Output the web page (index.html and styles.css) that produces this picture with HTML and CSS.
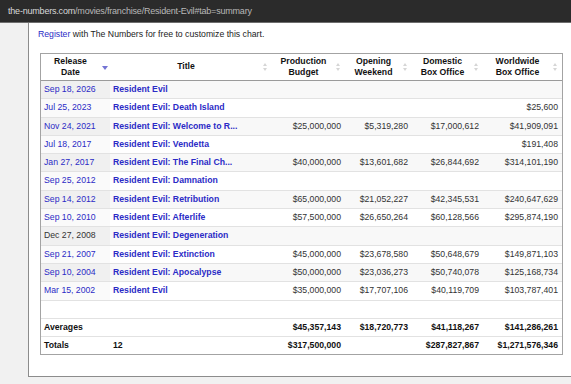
FILE: index.html
```html
<!DOCTYPE html>
<html lang="en">
<head>
    <meta charset="UTF-8">
    <meta name="viewport" content="width=device-width, initial-scale=1.0">
    <title>Resident Evil - The Numbers</title>
    <link rel="stylesheet" href="styles.css">
</head>
<body>
    <div class="urlbar">
        <span class="domain">the-numbers.com</span><span class="path">/movies/franchise/Resident-Evil#tab=summary</span>
    </div>

    <div class="page">
        <div class="panel">
            <p class="register"><a href="#">Register</a> with The Numbers for free to customize this chart.</p>

            <div class="table-box">
                <table class="chart">
                    <colgroup>
                        <col class="c-date">
                        <col class="c-title">
                        <col class="c-budget">
                        <col class="c-opening">
                        <col class="c-domestic">
                        <col class="c-world">
                    </colgroup>
                    <thead>
                        <tr>
                            <th class="sorted-desc">Release<br>Date</th>
                            <th class="sortable">Title</th>
                            <th class="sortable">Production<br>Budget</th>
                            <th class="sortable">Opening<br>Weekend</th>
                            <th class="sortable">Domestic<br>Box Office</th>
                            <th class="sortable">Worldwide<br>Box Office</th>
                        </tr>
                    </thead>
                    <tbody>
                        <tr class="odd">
                            <td class="sorted"><a href="#">Sep 18, 2026</a></td>
                            <td><b><a href="#">Resident Evil</a></b></td>
                            <td class="num"></td>
                            <td class="num"></td>
                            <td class="num"></td>
                            <td class="num"></td>
                        </tr>
                        <tr>
                            <td class="sorted"><a href="#">Jul 25, 2023</a></td>
                            <td><b><a href="#">Resident Evil: Death Island</a></b></td>
                            <td class="num"></td>
                            <td class="num"></td>
                            <td class="num"></td>
                            <td class="num">$25,600</td>
                        </tr>
                        <tr class="odd">
                            <td class="sorted"><a href="#">Nov 24, 2021</a></td>
                            <td><b><a href="#">Resident Evil: Welcome to R...</a></b></td>
                            <td class="num">$25,000,000</td>
                            <td class="num">$5,319,280</td>
                            <td class="num">$17,000,612</td>
                            <td class="num">$41,909,091</td>
                        </tr>
                        <tr>
                            <td class="sorted"><a href="#">Jul 18, 2017</a></td>
                            <td><b><a href="#">Resident Evil: Vendetta</a></b></td>
                            <td class="num"></td>
                            <td class="num"></td>
                            <td class="num"></td>
                            <td class="num">$191,408</td>
                        </tr>
                        <tr class="odd">
                            <td class="sorted"><a href="#">Jan 27, 2017</a></td>
                            <td><b><a href="#">Resident Evil: The Final Ch...</a></b></td>
                            <td class="num">$40,000,000</td>
                            <td class="num">$13,601,682</td>
                            <td class="num">$26,844,692</td>
                            <td class="num">$314,101,190</td>
                        </tr>
                        <tr>
                            <td class="sorted"><a href="#">Sep 25, 2012</a></td>
                            <td><b><a href="#">Resident Evil: Damnation</a></b></td>
                            <td class="num"></td>
                            <td class="num"></td>
                            <td class="num"></td>
                            <td class="num"></td>
                        </tr>
                        <tr class="odd">
                            <td class="sorted"><a href="#">Sep 14, 2012</a></td>
                            <td><b><a href="#">Resident Evil: Retribution</a></b></td>
                            <td class="num">$65,000,000</td>
                            <td class="num">$21,052,227</td>
                            <td class="num">$42,345,531</td>
                            <td class="num">$240,647,629</td>
                        </tr>
                        <tr>
                            <td class="sorted"><a href="#">Sep 10, 2010</a></td>
                            <td><b><a href="#">Resident Evil: Afterlife</a></b></td>
                            <td class="num">$57,500,000</td>
                            <td class="num">$26,650,264</td>
                            <td class="num">$60,128,566</td>
                            <td class="num">$295,874,190</td>
                        </tr>
                        <tr class="odd">
                            <td class="sorted">Dec 27, 2008</td>
                            <td><b><a href="#">Resident Evil: Degeneration</a></b></td>
                            <td class="num"></td>
                            <td class="num"></td>
                            <td class="num"></td>
                            <td class="num"></td>
                        </tr>
                        <tr>
                            <td class="sorted"><a href="#">Sep 21, 2007</a></td>
                            <td><b><a href="#">Resident Evil: Extinction</a></b></td>
                            <td class="num">$45,000,000</td>
                            <td class="num">$23,678,580</td>
                            <td class="num">$50,648,679</td>
                            <td class="num">$149,871,103</td>
                        </tr>
                        <tr class="odd">
                            <td class="sorted"><a href="#">Sep 10, 2004</a></td>
                            <td><b><a href="#">Resident Evil: Apocalypse</a></b></td>
                            <td class="num">$50,000,000</td>
                            <td class="num">$23,036,273</td>
                            <td class="num">$50,740,078</td>
                            <td class="num">$125,168,734</td>
                        </tr>
                        <tr>
                            <td class="sorted"><a href="#">Mar 15, 2002</a></td>
                            <td><b><a href="#">Resident Evil</a></b></td>
                            <td class="num">$35,000,000</td>
                            <td class="num">$17,707,106</td>
                            <td class="num">$40,119,709</td>
                            <td class="num">$103,787,401</td>
                        </tr>
                    </tbody>
                    <tfoot>
                        <tr class="spacer">
                            <td colspan="6"></td>
                        </tr>
                        <tr>
                            <td>Averages</td>
                            <td></td>
                            <td class="num">$45,357,143</td>
                            <td class="num">$18,720,773</td>
                            <td class="num">$41,118,267</td>
                            <td class="num">$141,286,261</td>
                        </tr>
                        <tr class="last">
                            <td>Totals</td>
                            <td>12</td>
                            <td class="num">$317,500,000</td>
                            <td class="num"></td>
                            <td class="num">$287,827,867</td>
                            <td class="num">$1,271,576,346</td>
                        </tr>
                    </tfoot>
                </table>
            </div>
        </div>
    </div>
</body>
</html>
```

FILE: styles.css
```css
* {
    margin: 0;
    padding: 0;
    box-sizing: border-box;
}

html, body {
    width: 571px;
    height: 384px;
    overflow: hidden;
}

body {
    background-color: #f1f1f1;
    font-family: 'Liberation Sans', Arial, sans-serif;
}

a {
    color: #2b2bc6;
    text-decoration: none;
}

/* browser address bar */
.urlbar {
    height: 23px;
    padding: 0 8px;
    background-color: #2b2b2b;
    border-bottom: 1px solid #6e6e6e;
    font-size: 9px;
    letter-spacing: -0.2px;
    line-height: 22px;
    white-space: nowrap;
}

.urlbar .domain {
    color: #d8d8d8;
}

.urlbar .path {
    color: #b8b8b8;
}

/* page */
.page {
    padding-left: 28px;
}

.panel {
    width: 560px;
    padding: 6px 0 21px 9px;
    background-color: #fff;
    border-left: 1px solid #8c8c8c;
    border-bottom: 1px solid #8c8c8c;
}

.register {
    font-size: 8.7px;
    line-height: 11px;
    color: #222;
}

.table-box {
    width: 523px;
    margin: 13px 0 0 2px;
    border: 1px solid #a3a3a3;
}

.chart {
    width: 100%;
    table-layout: fixed;
    border-collapse: separate;
    border-spacing: 0;
    font-size: 8.7px;
    color: #333;
}

.c-date { width: 69px; }
.c-title { width: 162px; }
.c-budget { width: 73px; }
.c-opening { width: 67px; }
.c-domestic { width: 71px; }
.c-world { width: 79px; }

.chart th {
    position: relative;
    padding: 1.5px 14px 1.5px 4px;
    line-height: 11.5px;
    font-weight: bold;
    color: #111;
    text-align: center;
    border-bottom: 1px solid #9a9a9a;
}

/* sort arrows */
.chart th.sortable::before,
.chart th.sortable::after {
    content: '';
    position: absolute;
    right: 5px;
    border-left: 2.5px solid transparent;
    border-right: 2.5px solid transparent;
}

.chart th.sortable::before {
    top: calc(50% - 4px);
    border-bottom: 3px solid #d6d6d6;
}

.chart th.sortable::after {
    top: calc(50% + 1px);
    border-top: 3px solid #d6d6d6;
}

.chart th.sorted-desc::after {
    content: '';
    position: absolute;
    right: 2px;
    top: calc(50% - 1px);
    border-left: 3px solid transparent;
    border-right: 3px solid transparent;
    border-top: 4px solid #7474d4;
}

.chart td {
    padding: 3px 4px 3px 3px;
    line-height: 11.3px;
    border-bottom: 1px solid #e2e2e2;
    white-space: nowrap;
    overflow: hidden;
}

.chart td.num {
    text-align: right;
}

.chart td.sorted {
    background-color: #fafafa;
}

.chart tr.odd td {
    background-color: #f8f8f8;
}

.chart tr.odd td.sorted {
    background-color: #f0f0f0;
}

.chart tfoot td {
    font-weight: bold;
    color: #111;
}

.chart tr.spacer td {
    height: 18px;
}

.chart tr.last td {
    border-bottom: none;
}
```
